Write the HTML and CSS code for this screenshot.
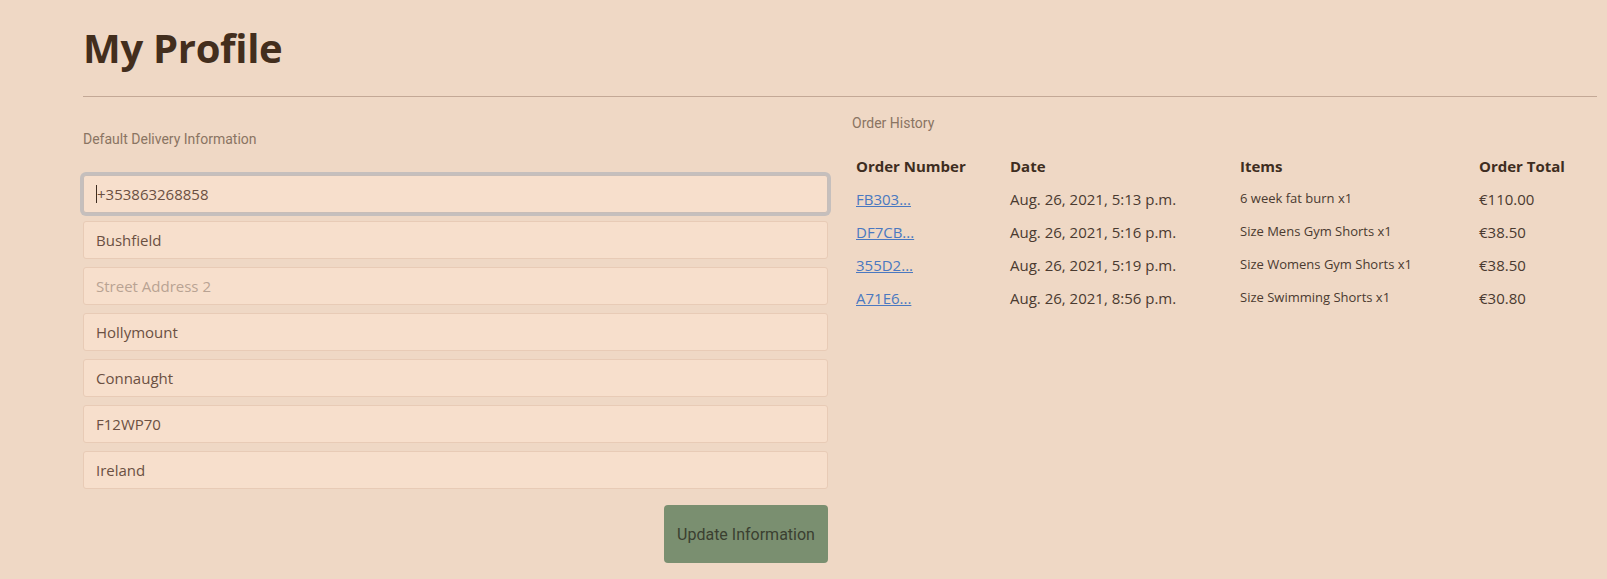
FILE: index.html
```html
<!DOCTYPE html>
<html lang="en">
<head>
<meta charset="utf-8">
<title>My Profile</title>
<link rel="stylesheet" href="styles.css">
</head>
<body>
<main class="page">
  <h1 class="title">My Profile</h1>
  <hr class="rule">
  <div class="columns">
    <section class="col">
      <p class="label label-left">Default Delivery Information</p>
      <form class="form">
        <div class="field focused"><span class="caret"></span>+353863268858</div>
        <div class="field">Bushfield</div>
        <div class="field placeholder">Street Address 2</div>
        <div class="field">Hollymount</div>
        <div class="field">Connaught</div>
        <div class="field">F12WP70</div>
        <div class="field">Ireland</div>
        <div class="actions"><button type="button" class="btn">Update Information</button></div>
      </form>
    </section>
    <section class="col">
      <p class="label label-right">Order History</p>
      <table class="orders">
        <colgroup>
          <col class="c1"><col class="c2"><col class="c3"><col class="c4">
        </colgroup>
        <thead>
          <tr><th>Order Number</th><th>Date</th><th>Items</th><th>Order Total</th></tr>
        </thead>
        <tbody>
          <tr><td><a href="#">FB303...</a></td><td>Aug. 26, 2021, 5:13 p.m.</td><td class="item">6 week fat burn x1</td><td>€110.00</td></tr>
          <tr><td><a href="#">DF7CB...</a></td><td>Aug. 26, 2021, 5:16 p.m.</td><td class="item">Size Mens Gym Shorts x1</td><td>€38.50</td></tr>
          <tr><td><a href="#">355D2...</a></td><td>Aug. 26, 2021, 5:19 p.m.</td><td class="item">Size Womens Gym Shorts x1</td><td>€38.50</td></tr>
          <tr><td><a href="#">A71E6...</a></td><td>Aug. 26, 2021, 8:56 p.m.</td><td class="item">Size Swimming Shorts x1</td><td>€30.80</td></tr>
        </tbody>
      </table>
    </section>
  </div>
</main>
</body>
</html>
```
FILE: styles.css
```css
html, body {
  margin: 0;
  padding: 0;
  background: #efd8c5;
}
body {
  font-family: "Open Sans", "Noto Sans", sans-serif;
  color: #3e2d21;
}
.page {
  padding: 0 10px 0 83px;
}
.title {
  margin: 0;
  padding-top: 18px;
  height: 60px;
  font-family: "Open Sans", sans-serif;
  font-weight: 700;
  font-size: 40px;
  line-height: 60px;
  letter-spacing: -0.3px;
  color: #432e1d;
}
.rule {
  margin: 18px 0 0 0;
  border: 0;
  border-top: 1px solid #c3a896;
  height: 0;
}
.columns {
  display: grid;
  grid-template-columns: 1fr 1fr;
  column-gap: 24px;
}
.label {
  margin: 0;
  font-family: Roboto, sans-serif;
  font-size: 14px;
  line-height: 16px;
  color: #8a7462;
}
.label-left {
  padding-top: 34px;
  height: 44px;
}
.label-right {
  padding-top: 18px;
  height: 34px;
}
.form {
  display: flex;
  flex-direction: column;
  gap: 8px;
}
.field {
  box-sizing: border-box;
  height: 38px;
  padding: 0 12px;
  border: 1px solid #e8cbb6;
  border-radius: 3px;
  background: #f7dfcc;
  font-family: "Open Sans", sans-serif;
  font-size: 15px;
  line-height: 36px;
  color: #6b5042;
  display: flex;
  align-items: center;
}
.field.focused {
  border-color: #c7bdb8;
  box-shadow: 0 0 0 3px #c5bfbd;
}
.caret {
  display: inline-block;
  width: 1px;
  height: 18px;
  background: #3e2d21;
}
.field.placeholder {
  color: #b9a393;
}
.actions {
  display: flex;
  justify-content: flex-end;
  padding-top: 8px;
}
.btn {
  width: 164px;
  height: 58px;
  border: 0;
  border-radius: 4px;
  background: #7a8f70;
  font-family: Roboto, sans-serif;
  font-size: 16px;
  color: #3b3f30;
  padding: 0;
}
.orders {
  width: 100%;
  table-layout: fixed;
  border-collapse: collapse;
}
.c1 { width: 154px; }
.c2 { width: 230px; }
.c3 { width: 239px; }
.c4 { width: auto; }
.orders th, .orders td {
  height: 33px;
  padding: 0 4px;
  text-align: left;
  vertical-align: middle;
  white-space: nowrap;
  font-size: 15px;
}
.orders th {
  font-weight: 700;
  color: #3e2d21;
}
.orders td {
  color: #4a3a30;
}
.orders td.item {
  font-size: 13px;
  vertical-align: top;
  padding-top: 7px;
  box-sizing: border-box;
}
.orders a {
  color: #4a78c0;
  text-decoration: underline;
}
```
